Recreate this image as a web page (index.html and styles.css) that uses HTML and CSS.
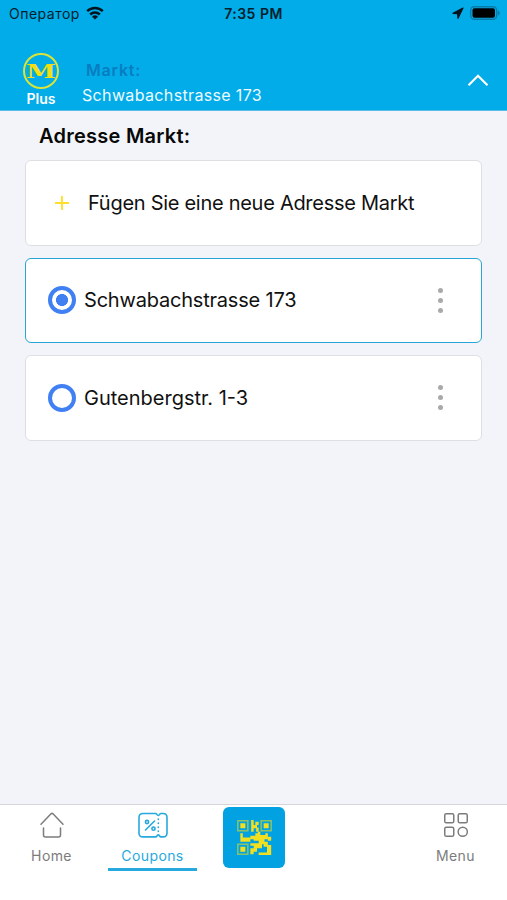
FILE: index.html
```html
<!DOCTYPE html>
<html lang="de">

<head>
    <meta charset="UTF-8">
    <meta name="viewport" content="width=device-width, initial-scale=1.0">
    <title>Adresse Markt</title>
    <link rel="stylesheet" href="styles.css">
</head>

<body>
    <header class="header">
        <div class="status-bar">
            <div class="carrier">
                <span>Оператор</span>
                <svg width="20" height="14" viewBox="0 0 20 14">
                    <path d="M2.2 5.2a11.2 11.2 0 0 1 15.6 0M5.2 8.5a7 7 0 0 1 9.6 0" fill="none" stroke="#00141d" stroke-width="2.5" />
                    <path d="M10 13.6 7 10.7a4.3 4.3 0 0 1 6 0z" fill="#00141d" />
                </svg>
            </div>
            <div class="time">7:35 PM</div>
            <div class="status-icons">
                <svg width="12" height="12" viewBox="0 0 12 12">
                    <path d="M11 1 1 6.3l4.600.4.400 4.600z" fill="#00141d" stroke="#00141d" stroke-width="1.200" stroke-linejoin="round" />
                </svg>
                <svg width="30" height="14" viewBox="0 0 30 14">
                    <rect x=".7" y=".7" width="26" height="12.6" rx="3.5" fill="none" stroke="#087ba8" stroke-width="1.4" />
                    <rect x="2.5" y="2.3" width="22.5" height="9.4" rx="2" fill="#000" />
                    <path d="M28 4.500v5q1.700-.7 1.700-2.500T28 4.500z" fill="#087ba8" />
                </svg>
            </div>
        </div>
        <div class="market">
            <div class="logo">
                <svg width="38" height="38" viewBox="0 0 38 38">
                    <circle cx="19" cy="19" r="17" fill="none" stroke="#d8e33b" stroke-width="2" />
                    <text x="4" y="25.500" textLength="30" lengthAdjust="spacingAndGlyphs" class="logo-letter">M</text>
                </svg>
                <span class="logo-plus">Plus</span>
            </div>
            <div class="market-info">
                <div class="market-label">Markt:</div>
                <div class="market-name">Schwabachstrasse 173</div>
            </div>
            <svg class="chevron" width="22" height="14" viewBox="0 0 22 14">
                <path d="M1.500 12.200 11 2.700l9.500 9.500" fill="none" stroke="#fff" stroke-width="2.200" />
            </svg>
        </div>
    </header>

    <main class="content">
        <h1 class="title">Adresse Markt:</h1>
        <div class="card card-add">
            <svg class="plus" width="14" height="14" viewBox="0 0 14 14">
                <path d="M7 0v14M0 7h14" stroke="#ffdf2b" stroke-width="1.900" />
            </svg>
            <span class="add-text">Fügen Sie eine neue Adresse Markt</span>
        </div>
        <div class="card selected">
            <span class="radio checked"></span>
            <span class="address">Schwabachstrasse 173</span>
            <span class="dots"><i></i><i></i><i></i></span>
        </div>
        <div class="card">
            <span class="radio"></span>
            <span>Gutenbergstr. 1-3</span>
            <span class="dots"><i></i><i></i><i></i></span>
        </div>
    </main>

    <nav class="tabs">
        <div class="tab">
            <svg width="26" height="28" viewBox="0 0 26 28" fill="none" stroke="#7c7c7c" stroke-width="1.500" stroke-linecap="round" stroke-linejoin="round">
                <path d="M2 13.200 11.800 3q1.200-1.200 2.400 0L24 13.200M4.500 17v7q0 2 2 2h13q2 0 2-2v-7" />
            </svg>
            <span>Home</span>
        </div>
        <div class="tab active">
            <svg width="32" height="28" viewBox="0 0 32 28" fill="none" stroke="#27a9dd" stroke-width="1.600" stroke-linecap="round" stroke-linejoin="round">
                <path d="M6 2.500h12.500q1 0 1.500 1t1.300 1 1.300-1 1.400-1H26q4 0 4 4v15.400q0 4-4 4h-2q-1 0-1.400-1t-1.300-1-1.300 1-1.500 1H6q-4 0-4-4V6.500q0-4 4-4z" />
                <path d="M21.300 8v.5M21.300 12v.5M21.300 16v.5M21.300 20v.5M8.500 19 17.500 10" />
                <circle cx="10" cy="11" r="1.600" />
                <circle cx="16.500" cy="17.700" r="1.600" />
            </svg>
            <span>Coupons</span>
        </div>
        <div class="qr">
            <svg width="35" height="35" viewBox="0 0 21 21">
                <g fill="none" stroke="#8bc466" stroke-width=".9">
                    <path d="M.5.500h6v6h-6zM14.500.500h6v6h-6zM.5 14.500h6v6h-6z" />
                </g>
                <path fill="#f1df20" d="M2 2h3v3H2zM16 2h3v3h-3zM2 16h3v3H2zM8.500 0h1.500v3h1V1h2v2h-1v1.500h1V7h-1.500V5H10v2H8.500zM2 8h1.500v2.500h4.500v-1h3V8h1.500V7H14v2h3V8h1.500v2h2v2.500h-2v-1h-2v1.500h2V15h2v6h-7.500v-1.500h5V16h-2v-1.500h-1V17h-3v2H10v1.500H8V17h2v-1.500H8V14h5v-1.500h-3v-1H8V13H2z" />
            </svg>
        </div>
        <div class="tab tab-last">
            <svg width="26" height="28" viewBox="0 0 26 28" fill="none" stroke="#7c7c7c" stroke-width="1.500">
                <rect x="1.750" y="2.750" width="9" height="9" rx="1.600" />
                <rect x="15.250" y="2.750" width="9" height="9" rx="1.600" />
                <rect x="1.750" y="16.250" width="9" height="9" rx="1.600" />
                <circle cx="19.750" cy="20.750" r="4.600" />
            </svg>
            <span>Menu</span>
        </div>
    </nav>
</body>

</html>
```

FILE: styles.css
```css
* {
    box-sizing: border-box;
}

body {
    margin: 0;
    height: 900px;
    display: flex;
    flex-direction: column;
    background: #f2f4f9;
    color: #111;
    font-family: Inter, "Liberation Sans", sans-serif;
    white-space: nowrap;
}

.header {
    height: 111px;
    background: #02ace8;
    border-bottom: 1px solid #5bbce6;
}

.status-bar {
    height: 28px;
    display: grid;
    grid-template-columns: 1fr auto 1fr;
    align-items: center;
    padding: 0 7px 0 9px;
    color: #00202d;
    font-size: 14px;
}

.carrier {
    display: flex;
    align-items: center;
    gap: 5px;
    margin-top: -1px;
    letter-spacing: .5px;
}

.carrier svg {
    margin-top: -2px;
}

.time {
    margin: -1px 0 0 -2px;
    font-weight: 600;
    letter-spacing: .5px;
}

.status-icons {
    display: flex;
    justify-content: flex-end;
    align-items: center;
    gap: 6px;
    margin-top: -2px;
}

.market {
    display: flex;
    padding: 24px 18px 0 22px;
}

.logo {
    width: 38px;
    display: flex;
    flex-direction: column;
    align-items: center;
}

.logo-letter {
    font-family: "DejaVu Serif", serif;
    font-weight: bold;
    font-size: 18px;
    fill: #f2df13;
}

.logo-plus {
    color: #fff;
    font-size: 14px;
    font-weight: 600;
    line-height: 17px;
}

.market-info {
    flex: 1;
    padding: 7px 0 0 22px;
}

.market-label {
    padding-left: 4px;
    color: #087cc1;
    font-size: 16px;
    font-weight: 600;
    line-height: 22px;
    letter-spacing: .8px;
}

.market-name {
    margin-top: 3px;
    color: #edfaff;
    font-size: 16px;
    line-height: 22px;
    letter-spacing: .35px;
}

.chevron {
    margin-top: 21px;
}

.content {
    flex: 1;
    padding: 10px 25px 0;
}

.title {
    margin: 0 0 9px 14px;
    font-size: 20px;
    font-weight: 600;
    line-height: 30px;
    letter-spacing: .25px;
    color: #080808;
}

.card {
    height: 85.5px;
    margin-bottom: 12px;
    padding: 0 38px 0 23px;
    display: flex;
    align-items: center;
    background: #fff;
    border: 1px solid #dedfe2;
    border-radius: 6px;
    font-size: 20px;
}

.card-add {
    padding-left: 29px;
}

.add-text {
    margin-left: 19px;
    letter-spacing: -.28px;
}

.address {
    letter-spacing: -.2px;
}

.selected {
    border-color: #27a5d6;
}

.radio {
    width: 28px;
    height: 28px;
    margin: 0 8px 0 -1px;
    border: 4px solid #4080f2;
    border-radius: 50%;
}

.checked {
    background: radial-gradient(circle, #4080f2 5.7px, #fff 6.3px);
}

.dots {
    margin-left: auto;
    display: flex;
    flex-direction: column;
    gap: 5px;
}

.dots i {
    width: 5px;
    height: 5px;
    border-radius: 50%;
    background: #a9a9a9;
}

.tabs {
    height: 96px;
    display: flex;
    padding: 2px 7px 0 7px;
    background: #fff;
    border-top: 1px solid #d5d6d9;
}

.tab {
    width: 89px;
    height: 64px;
    padding-top: 4px;
    display: flex;
    flex-direction: column;
    align-items: center;
    color: #7c7c7c;
    font-size: 14px;
    line-height: 20px;
    letter-spacing: .4px;
}

.tab span {
    margin-top: 7px;
}

.active {
    margin-left: 12px;
    color: #27a9dd;
    border-bottom: 3px solid #27a9dd;
}

.qr {
    width: 62px;
    height: 61px;
    margin-left: 26px;
    display: flex;
    align-items: center;
    justify-content: center;
    background: #02a2e2;
    border-radius: 6px;
}

.tab-last {
    margin-left: auto;
}
```
